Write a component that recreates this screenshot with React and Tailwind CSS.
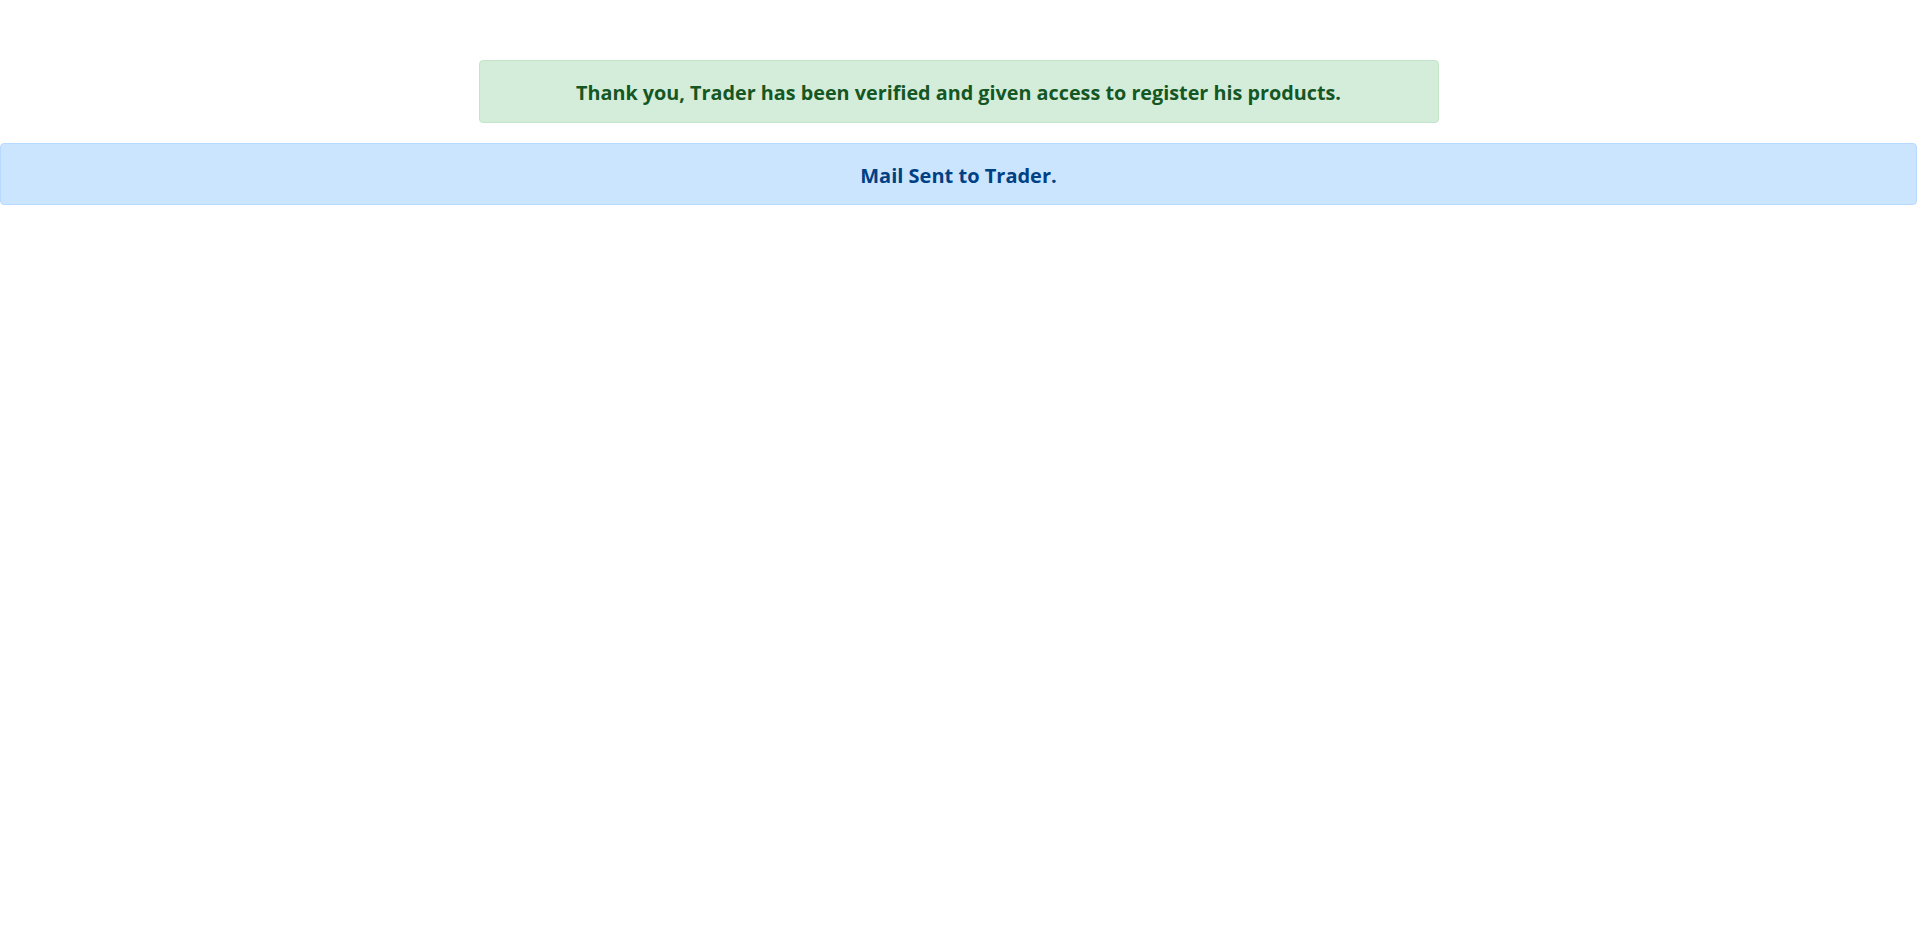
import React from 'react'

const App = () => {
    return (
        <div className="min-h-[943px] bg-white pt-[60px]" style={{ fontFamily: '"Open Sans", "DejaVu Sans", sans-serif' }}>
            <div className="w-[960px] mx-auto h-[63px] pt-[3px] flex items-center justify-center bg-[#d4edda] border border-[#c3e6cb] rounded text-[#155724]">
                <h4 className="text-[19.8px] font-bold">Thank you, Trader has been verified and given access to register his products.</h4>
            </div>
            <div className="mt-[20px] h-[62px] pt-[3px] flex items-center justify-center bg-[#cce5ff] border border-[#b8daff] rounded text-[#004085]">
                <h4 className="text-[20px] font-bold">Mail Sent to Trader.</h4>
            </div>
        </div>
    )
}

export default App
